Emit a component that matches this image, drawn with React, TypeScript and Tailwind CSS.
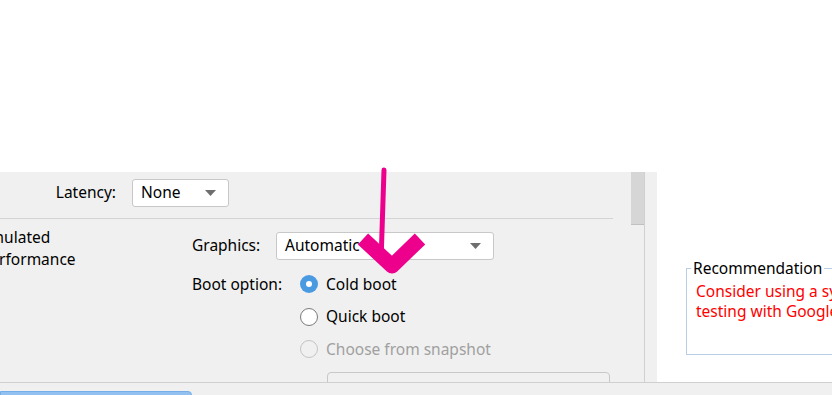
const font = { fontFamily: '"Noto Sans", "Open Sans", sans-serif' };

function Select({ value, width }: { value: string; width: string }) {
  return (
    <div
      className={`${width} h-[28px] flex items-center justify-between pl-[8px] pr-[12px] bg-white border border-[#c8c8c8] rounded-[3px]`}
    >
      <span className="text-[15.5px] text-black leading-none">{value}</span>
      <svg width="11" height="6" viewBox="0 0 11 6">
        <path d="M0 0 H11 L5.5 6 Z" fill="#6e6e6e" />
      </svg>
    </div>
  );
}

function Radio({ label, checked, disabled }: { label: string; checked?: boolean; disabled?: boolean }) {
  return (
    <div className="flex items-center gap-[8px] h-[32.5px]">
      {checked ? (
        <div className="w-[18px] h-[18px] rounded-full bg-[#4a9ae2] flex items-center justify-center">
          <div className="w-[6px] h-[6px] rounded-full bg-white" />
        </div>
      ) : (
        <div
          className={`w-[18px] h-[18px] rounded-full border ${disabled ? 'border-[#c4c4c4] bg-[#f0f0f0]' : 'border-[#7a7a7a] bg-white'}`}
        />
      )}
      <span className={`text-[15.5px] leading-none ${disabled ? 'text-[#a0a0a0]' : 'text-black'}`}>{label}</span>
    </div>
  );
}

export default function App() {
  return (
    <div className="w-[832px] h-[395px] bg-white overflow-hidden relative" style={font}>
      <div className="h-[172px] bg-white" />

      <div className="flex h-[210px]">
        {/* settings panel */}
        <div className="w-[645px] shrink-0 bg-[#f0f0f0] flex border-r border-[#d0d0d0]">
          <div className="flex-1 min-w-0 overflow-hidden">
            <div className="flex items-center h-[39px] pt-[2px]">
              <span className="w-[116px] text-right text-[15.5px] text-black">Latency:</span>
              <div className="ml-[16px]">
                <Select value="None" width="w-[97px]" />
              </div>
            </div>
            <div className="h-[7px]" />
            <div className="h-px bg-[#d4d4d4] w-[613px]" />
            <div className="flex pt-[7px]">
              <div className="w-[211px] shrink-0 ml-[-19px] text-[15.5px] leading-[22px] text-black">
                <div>Emulated</div>
                <div>Performance</div>
              </div>
              <div className="flex-1 pt-[5px]">
                <div className="flex items-center h-[30px]">
                  <span className="w-[84px] text-[15.5px] text-black">Graphics:</span>
                  <Select value="Automatic" width="w-[218px]" />
                </div>
                <div className="flex mt-[7px]">
                  <span className="w-[108px] text-[15.5px] text-black leading-[32px]">Boot option:</span>
                  <div>
                    <Radio label="Cold boot" checked />
                    <Radio label="Quick boot" />
                    <Radio label="Choose from snapshot" disabled />
                    <div className="ml-[27px] mt-[6px] w-[283px] h-[20px] border border-[#c8c8c8] rounded-t-[4px]" />
                  </div>
                </div>
              </div>
            </div>
          </div>
          <div className="w-[13px] shrink-0 bg-[#f0f0f0] flex flex-col">
            <div className="h-[53px] bg-[#d6d6d6] border-b border-[#c0c0c0]" />
          </div>
        </div>

        <div className="w-[12px] shrink-0 bg-[#f0f0f0]" />

        {/* recommendation panel */}
        <div className="flex-1 min-w-0 overflow-hidden bg-white pl-[29px] pt-[96px]">
          <div className="relative border border-[#b9cde5] border-r-0 h-[87px] pl-[9px] pt-[12px]">
            <span className="absolute top-[-11px] left-[4px] bg-white px-[2px] text-[15.5px] text-black leading-[20px]">
              Recommendation
            </span>
            <div className="text-[15.5px] leading-[20px] text-[#ff0000] whitespace-nowrap">
              <div>Consider using a system image with Google APIs to enable</div>
              <div>testing with Google Play services.</div>
            </div>
          </div>
        </div>
      </div>

      {/* bottom strip */}
      <div className="h-[13px] bg-[#f0f0f0] border-t border-[#d0d0d0] relative">
        <div className="absolute left-0 top-[8px] w-[192px] h-[6px] bg-[#92c0f0] border border-[#76aeea] rounded-tr-[4px]" />
      </div>

      {/* pink annotation arrow */}
      <svg className="absolute left-0 top-0" width="832" height="395" viewBox="0 0 832 395">
        <path d="M384 170 L381 262" stroke="#ec008c" strokeWidth="5" fill="none" strokeLinecap="round" />
        <path
          d="M363 239 L392 266 L420 239"
          stroke="#ec008c"
          strokeWidth="15"
          fill="none"
          strokeLinejoin="round"
        />
      </svg>
    </div>
  );
}
